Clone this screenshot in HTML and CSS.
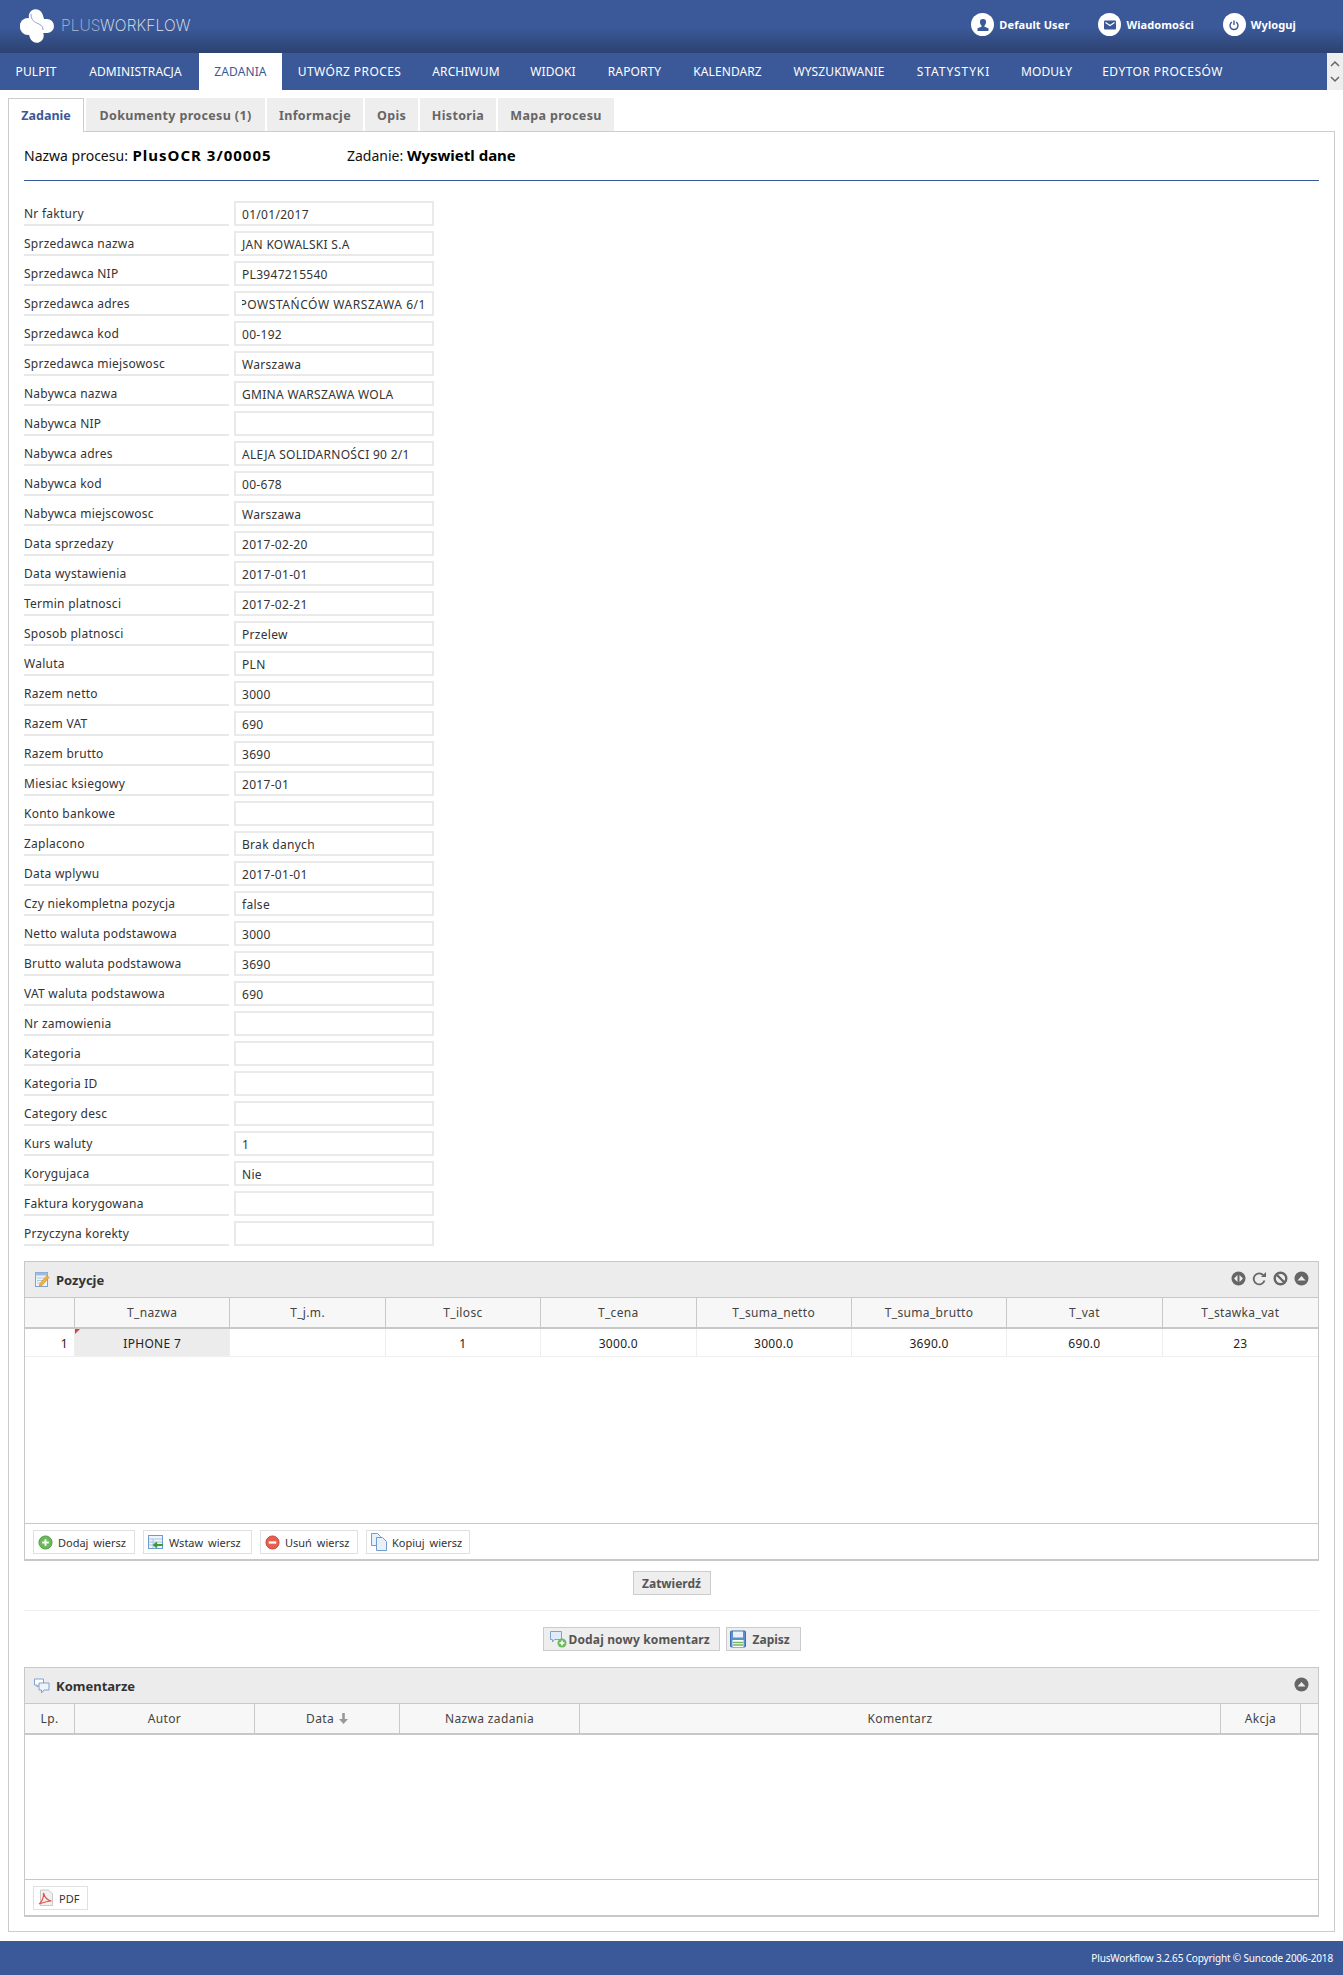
FILE: index.html
```html
<!DOCTYPE html>
<html lang="pl">
<head>
<meta charset="utf-8">
<title>PlusWorkflow</title>
<link rel="stylesheet" href="styles.css">
</head>
<body>
<header class="top">
  <div class="logo">
    <svg class="logo-mark" width="34" height="34" viewBox="0 0 34 34"><rect x="0" y="10" width="34" height="14" rx="7" fill="#fff"/><rect x="0" y="9" width="16" height="17" rx="8" fill="#fff"/><rect x="10.500" y="0" width="14" height="25" rx="7" fill="#fff" transform="rotate(-18 17.500 12.500)"/><rect x="8" y="9" width="14" height="25" rx="7" fill="#fff" transform="rotate(-18 15 21.500)"/><path fill="none" stroke="#8fa3c9" stroke-width="1" d="M11 5c0 6 3 8 8 10 3 1.500 4 3 4 6"/></svg>
    <span class="logo-plus">PLUS</span><span class="logo-wf">WORKFLOW</span>
  </div>
  <div class="user-links">
    <a class="ulink"><span class="ucircle"><svg width="14" height="14" viewBox="0 0 14 14"><path fill="#3b5998" d="M7 1a3 3 0 0 1 3 3.200c0 1.500-.8 2.800-1.500 3.300v1.200l4 1.500V13H1.500v-2.800l4-1.500V7.500C4.800 7 4 5.700 4 4.200A3 3 0 0 1 7 1z"/></svg></span>Default User</a>
    <a class="ulink"><span class="ucircle"><svg width="14" height="14" viewBox="0 0 14 14"><rect x="1" y="2.500" width="12" height="9" rx="1" fill="#3b5998"/><path d="M2.500 4.500l4.500 3 4.500-3" fill="none" stroke="#fff" stroke-width="1.300"/></svg></span>Wiadomości</a>
    <a class="ulink"><span class="ucircle"><svg width="14" height="14" viewBox="0 0 14 14"><path d="M4.800 4.200a4 4 0 1 0 4.400 0" fill="none" stroke="#3b5998" stroke-width="1.400"/><path d="M7 2.500v4.500" stroke="#3b5998" stroke-width="1.400"/></svg></span>Wyloguj</a>
  </div>
</header>
<nav class="nav">
  <a class="nav-item n1">PULPIT</a>
  <a class="nav-item n2">ADMINISTRACJA</a>
  <a class="nav-item nav-active n3">ZADANIA</a>
  <a class="nav-item n4">UTWÓRZ PROCES</a>
  <a class="nav-item n5">ARCHIWUM</a>
  <a class="nav-item n6">WIDOKI</a>
  <a class="nav-item n7">RAPORTY</a>
  <a class="nav-item n8">KALENDARZ</a>
  <a class="nav-item n9">WYSZUKIWANIE</a>
  <a class="nav-item n10">STATYSTYKI</a>
  <a class="nav-item n11">MODUŁY</a>
  <a class="nav-item n12">EDYTOR PROCESÓW</a>
  <div class="nav-scroll">
    <svg width="10" height="8" viewBox="0 0 10 8"><path d="M1 6l4-4 4 4" fill="none" stroke="#666" stroke-width="1.500"/></svg>
    <svg width="10" height="8" viewBox="0 0 10 8"><path d="M1 2l4 4 4-4" fill="none" stroke="#666" stroke-width="1.500"/></svg>
  </div>
</nav>
<main class="content">
  <div class="tabs">
    <a class="tab tab-active t1">Zadanie</a>
    <a class="tab t2">Dokumenty procesu (1)</a>
    <a class="tab t3">Informacje</a>
    <a class="tab t4">Opis</a>
    <a class="tab t5">Historia</a>
    <a class="tab t6">Mapa procesu</a>
  </div>
  <section class="panel">
    <div class="title">
      <span class="title-a">Nazwa procesu: <b class="proc">PlusOCR 3/00005</b></span>
      <span>Zadanie: <b>Wyswietl dane</b></span>
    </div>
    <form class="fields">
      <div class="row"><label>Nr faktury</label><div class="val">01/01/2017</div></div>
      <div class="row"><label>Sprzedawca nazwa</label><div class="val">JAN KOWALSKI S.A</div></div>
      <div class="row"><label>Sprzedawca NIP</label><div class="val">PL3947215540</div></div>
      <div class="row"><label>Sprzedawca adres</label><div class="val"><div class="val-clip"><span>POWSTAŃCÓW WARSZAWA 6/1</span></div></div></div>
      <div class="row"><label>Sprzedawca kod</label><div class="val">00-192</div></div>
      <div class="row"><label>Sprzedawca miejsowosc</label><div class="val">Warszawa</div></div>
      <div class="row"><label>Nabywca nazwa</label><div class="val">GMINA WARSZAWA WOLA</div></div>
      <div class="row"><label>Nabywca NIP</label><div class="val"></div></div>
      <div class="row"><label>Nabywca adres</label><div class="val">ALEJA SOLIDARNOŚCI 90 2/1</div></div>
      <div class="row"><label>Nabywca kod</label><div class="val">00-678</div></div>
      <div class="row"><label>Nabywca miejscowosc</label><div class="val">Warszawa</div></div>
      <div class="row"><label>Data sprzedazy</label><div class="val">2017-02-20</div></div>
      <div class="row"><label>Data wystawienia</label><div class="val">2017-01-01</div></div>
      <div class="row"><label>Termin platnosci</label><div class="val">2017-02-21</div></div>
      <div class="row"><label>Sposob platnosci</label><div class="val">Przelew</div></div>
      <div class="row"><label>Waluta</label><div class="val">PLN</div></div>
      <div class="row"><label>Razem netto</label><div class="val">3000</div></div>
      <div class="row"><label>Razem VAT</label><div class="val">690</div></div>
      <div class="row"><label>Razem brutto</label><div class="val">3690</div></div>
      <div class="row"><label>Miesiac ksiegowy</label><div class="val">2017-01</div></div>
      <div class="row"><label>Konto bankowe</label><div class="val"></div></div>
      <div class="row"><label>Zaplacono</label><div class="val">Brak danych</div></div>
      <div class="row"><label>Data wplywu</label><div class="val">2017-01-01</div></div>
      <div class="row"><label>Czy niekompletna pozycja</label><div class="val">false</div></div>
      <div class="row"><label>Netto waluta podstawowa</label><div class="val">3000</div></div>
      <div class="row"><label>Brutto waluta podstawowa</label><div class="val">3690</div></div>
      <div class="row"><label>VAT waluta podstawowa</label><div class="val">690</div></div>
      <div class="row"><label>Nr zamowienia</label><div class="val"></div></div>
      <div class="row"><label>Kategoria</label><div class="val"></div></div>
      <div class="row"><label>Kategoria ID</label><div class="val"></div></div>
      <div class="row"><label>Category desc</label><div class="val"></div></div>
      <div class="row"><label>Kurs waluty</label><div class="val">1</div></div>
      <div class="row"><label>Korygujaca</label><div class="val">Nie</div></div>
      <div class="row"><label>Faktura korygowana</label><div class="val"></div></div>
      <div class="row"><label>Przyczyna korekty</label><div class="val"></div></div>
    </form>

    <section class="box box-pos">
      <div class="box-head">
        <svg class="box-icon" width="16" height="17" viewBox="0 0 16 17"><rect x="1.500" y="1.500" width="12" height="14" fill="#eef4fb" stroke="#7fa3cf"/><rect x="1.500" y="1.500" width="12" height="3" fill="#9dbde0"/><path d="M3 7h8M3 9.500h6M3 12h4" stroke="#b9c8d8"/><path d="M5 15.500l1-3 7-8 2 2-7 8z" fill="#f3b23c" stroke="#c98a20" stroke-width=".6"/></svg>
        <span class="box-title">Pozycje</span>
        <div class="box-tools">
          <svg width="15" height="15" viewBox="0 0 15 15"><circle cx="7.500" cy="7.500" r="7" fill="#666"/><path d="M6.500 4v7L3 7.500zM8.500 4v7L12 7.500z" fill="#eee"/></svg>
          <svg width="15" height="15" viewBox="0 0 15 15"><path d="M12.500 9.500a5.500 5.500 0 1 1-1.200-5.300" fill="none" stroke="#666" stroke-width="1.800"/><path d="M14 1v5H9z" fill="#666"/></svg>
          <svg width="15" height="15" viewBox="0 0 15 15"><circle cx="7.500" cy="7.500" r="5.800" fill="#eee" stroke="#666" stroke-width="2.400"/><path d="M4 4l7 7" stroke="#666" stroke-width="2.400"/></svg>
          <svg width="15" height="15" viewBox="0 0 15 15"><circle cx="7.500" cy="7.500" r="7" fill="#666"/><path d="M3.500 9.500l4-4.500 4 4.500z" fill="#eee"/></svg>
        </div>
      </div>
      <div class="grid grid-pos grid-headrow">
        <div class="hcell"></div>
        <div class="hcell">T_nazwa</div><div class="hcell">T_j.m.</div><div class="hcell">T_ilosc</div><div class="hcell">T_cena</div>
        <div class="hcell">T_suma_netto</div><div class="hcell">T_suma_brutto</div><div class="hcell">T_vat</div><div class="hcell hcell-last">T_stawka_vat</div>
      </div>
      <div class="grid grid-pos grid-datarow">
        <div class="dcell dcell-num">1</div>
        <div class="dcell dcell-sel">IPHONE 7<i class="marker"></i></div><div class="dcell"></div><div class="dcell">1</div><div class="dcell">3000.0</div>
        <div class="dcell">3000.0</div><div class="dcell">3690.0</div><div class="dcell">690.0</div><div class="dcell">23</div>
      </div>
      <div class="grid-body grid-body-pos"></div>
      <div class="toolbar">
        <a class="btn b-add"><svg width="15" height="15" viewBox="0 0 16 16"><circle cx="8" cy="8" r="7" fill="#6cb85c" stroke="#4d9a43"/><path d="M8 4.500v7M4.500 8h7" stroke="#fff" stroke-width="2"/></svg>Dodaj wiersz</a>
        <a class="btn b-ins"><svg width="16" height="16" viewBox="0 0 16 16"><rect x=".5" y="1.500" width="14" height="13" fill="#eef4fb" stroke="#6f9bd1"/><path d="M1 5h13M1 8h13M1 11h13M5 5v9" stroke="#a9c4e4"/><path d="M15 11H6M9 8.500 6 11l3 2.500" fill="none" stroke="#3f9a3a" stroke-width="1.800"/></svg>Wstaw wiersz</a>
        <a class="btn b-del"><svg width="15" height="15" viewBox="0 0 16 16"><circle cx="8" cy="8" r="7" fill="#e5604f" stroke="#c5443a"/><rect x="4" y="6.800" width="8" height="2.400" fill="#fff"/></svg>Usuń wiersz</a>
        <a class="btn b-copy"><svg width="16" height="18" viewBox="0 0 16 18"><path d="M.5.500h6l3 3v9h-9z" fill="#e8f0fa" stroke="#6f9bd1"/><path d="M5.500 4.500h6l4 4v9h-10z" fill="#e8f0fa" stroke="#6f9bd1"/></svg>Kopiuj wiersz</a>
      </div>
    </section>

    <div class="submit-row"><a class="action action-plain">Zatwierdź</a></div>
    <div class="comment-actions">
      <a class="action act-new"><svg width="18" height="18" viewBox="0 0 18 18"><path d="M1.500 1.500h11v8h-7l-2 2.500V9.500h-2z" fill="#dfeafa" stroke="#7fa3cf"/><circle cx="13" cy="13" r="4.500" fill="#6cb85c"/><path d="M13 10.500v5M10.500 13h5" stroke="#fff" stroke-width="1.500"/></svg>Dodaj nowy komentarz</a>
      <a class="action act-save"><svg width="16" height="18" viewBox="0 0 16 18"><rect x=".5" y="1" width="15" height="16" rx="1" fill="#5b8fd0" stroke="#3f6fae"/><rect x="3" y="1.500" width="10" height="6" fill="#e8f0fa"/><rect x="2.500" y="10" width="11" height="7" fill="#fff"/><path d="M3 12.500h10M3 15h10" stroke="#6cb85c" stroke-width="1.500"/></svg>Zapisz</a>
    </div>

    <section class="box box-com">
      <div class="box-head">
        <svg class="box-icon" width="16" height="16" viewBox="0 0 16 16"><path d="M.5 1h9v6H4.500L3 9V7H.5z" fill="#fff" stroke="#7fa3cf"/><path d="M5 5h10v7h-5l-2.500 3v-3H5z" fill="#eef4fb" stroke="#7fa3cf"/></svg>
        <span class="box-title">Komentarze</span>
        <div class="box-tools">
          <svg width="15" height="15" viewBox="0 0 15 15"><circle cx="7.500" cy="7.500" r="7" fill="#666"/><path d="M3.500 9.500l4-4.500 4 4.500z" fill="#eee"/></svg>
        </div>
      </div>
      <div class="grid grid-com grid-headrow">
        <div class="hcell">Lp.</div><div class="hcell">Autor</div>
        <div class="hcell">Data <svg width="9" height="11" viewBox="0 0 9 11"><path d="M3.200 0h2.600v6H9l-4.500 5L0 6h3.200z" fill="#999"/></svg></div>
        <div class="hcell">Nazwa zadania</div><div class="hcell">Komentarz</div><div class="hcell">Akcja</div><div class="hcell hcell-last"></div>
      </div>
      <div class="grid-body grid-body-com"></div>
      <div class="toolbar">
        <a class="btn b-pdf"><svg width="16" height="18" viewBox="0 0 16 18"><path d="M2.500 1h8l4 4v11.500h-12z" fill="#f1f1f1" stroke="#c8c8c8"/><path d="M1 15c3-2 5-7 4.500-11 1 4 3 7 8 8-4 0-7 1-12.500 3z" fill="none" stroke="#e2574c" stroke-width="1.200"/></svg>PDF</a>
      </div>
    </section>
  </section>
</main>
<footer class="foot">PlusWorkflow 3.2.65 Copyright © Suncode 2006-2018</footer>
</body>
</html>
```
FILE: styles.css
```css
* { box-sizing: border-box; }
html, body { margin: 0; padding: 0; }
body { background: #fff; color: #222; font-family: "Noto Sans", "DejaVu Sans", sans-serif; font-size: 12px; width: 1343px; height: 1975px; display: flex; flex-direction: column; }
a { display: block; }

.top { height: 53px; background: linear-gradient(#3b5998 0, #3b5998 28px, #2c4270 53px); display: flex; align-items: center; justify-content: space-between; color: #fff; }
.logo { display: flex; align-items: center; padding-left: 20px; height: 53px; padding-bottom: 1px; }
.logo-mark { margin-right: 7px; }
.logo-plus, .logo-wf { font-family: "Inter", sans-serif; font-weight: 200; font-size: 15.500px; line-height: 1; }
.logo-plus { color: #aebbd6; width: 39px; letter-spacing: .1px; }
.logo-wf { color: #e4e9f3; letter-spacing: .15px; }
.user-links { display: flex; padding: 0 47px 4px 0; gap: 29px; }
.ulink { display: flex; align-items: center; gap: 5px; font-weight: 700; font-size: 11px; letter-spacing: .1px; }
.ucircle { width: 23px; height: 23px; border-radius: 50%; background: #fff; display: flex; align-items: center; justify-content: center; }

.nav { height: 37px; background: #3b5998; display: flex; color: #fff; position: relative; }
.nav-item { line-height: 37px; font-size: 12px; text-align: center; letter-spacing: .1px; white-space: nowrap; }
.nav-active { background: #fff; color: #3b5998; }
.n1 { width: 72px; } .n2 { width: 127px; } .n3 { width: 83px; } .n4 { width: 135px; letter-spacing: .4px; }
.n5 { width: 98px; } .n6 { width: 76px; } .n7 { width: 87px; } .n8 { width: 99px; }
.n9 { width: 124px; } .n10 { width: 105px; letter-spacing: .9px; } .n11 { width: 81px; } .n12 { width: 151px; letter-spacing: .45px; }
.nav-scroll { position: absolute; right: 0; top: 0; width: 16px; height: 37px; background: #eee; display: flex; flex-direction: column; align-items: center; justify-content: space-around; padding: 3px 0; }

.content { padding: 8px 8px 0; flex: 1; }
.tabs { display: flex; height: 33px; }
.tab { background: #eee; color: #666; font-weight: 700; font-size: 12.500px; letter-spacing: .35px; line-height: 35px; text-align: center; margin-right: 2px; height: 33px; }
.tab-active { background: #fff; color: #3b5998; border: 1px solid #ccc; border-bottom: 0; height: 34px; position: relative; z-index: 1; line-height: 33px; letter-spacing: 0; }
.t1 { width: 76px; } .t2 { width: 179px; } .t3 { width: 96px; } .t4 { width: 53px; } .t5 { width: 76px; } .t6 { width: 116px; }
.panel { border: 1px solid #ccc; padding: 0 15px; height: 1801px; }
.title { height: 49px; border-bottom: 1px solid #3b5998; font-size: 14px; display: flex; align-items: center; color: #111; padding-bottom: 3px; margin-bottom: 20px; }
.title-a { width: 323px; }
.title b { font-size: 15px; color: #000; }
.title .proc { letter-spacing: 1px; margin-left: 1px; }

.fields { display: flex; flex-direction: column; gap: 5px; }
.row { display: flex; gap: 5px; height: 25px; }
.row label { width: 205px; border-bottom: 2px solid #e8e8e8; line-height: 26px; color: #333; letter-spacing: .25px; }
.val { width: 200px; border: 2px solid #eaeaea; padding: 0 6px; line-height: 23px; color: #333; overflow: hidden; white-space: nowrap; letter-spacing: .3px; }
.val-clip { display: flex; justify-content: flex-end; overflow: hidden; }
.val-clip span { flex: none; letter-spacing: .55px; }

.box { border: 1px solid #c8c8c8; border-width: 1px 1px 2px; }
.box-pos { margin-top: 15px; height: 300px; }
.box-com { margin-top: 16px; height: 250px; }
.box-head { height: 36px; background: #ececec; display: flex; align-items: center; padding: 0 9px 0 9px; border-bottom: 1px solid #c8c8c8; }
.box-icon { margin-right: 6px; }
.box-title { font-weight: 700; font-size: 13px; color: #333; }
.box-tools { margin-left: auto; display: flex; gap: 6px; margin-bottom: 2px; }
.grid { display: grid; }
.grid-pos { grid-template-columns: 50px repeat(8, 1fr); }
.grid-com { grid-template-columns: 50px 180px 145px 180px 641px 80px 1fr; }
.grid-headrow { height: 31px; background: #f7f7f7; border-bottom: 2px solid #c8c8c8; }
.hcell { border-right: 1px solid #c8c8c8; display: flex; align-items: center; justify-content: center; gap: 5px; color: #444; font-size: 12px; letter-spacing: .35px; }
.hcell-last { border-right: 0; }
.grid-datarow { height: 28px; border-bottom: 1px solid #eee; }
.dcell { border-right: 1px solid #eee; display: flex; align-items: center; justify-content: center; color: #222; position: relative; letter-spacing: .3px; padding-top: 1px; }
.dcell:last-child { border-right: 0; }
.dcell-num { justify-content: flex-end; padding-right: 6px; }
.dcell-sel { background: #ececec; }
.marker { position: absolute; left: 0; top: 0; border-style: solid; border-width: 5px 5px 0 0; border-color: #e0403a transparent transparent transparent; }
.grid-body-pos { height: 166px; }
.grid-body-com { height: 144px; }
.toolbar { border-top: 1px solid #c8c8c8; height: 36px; display: flex; gap: 8px; padding: 6px 8px; }
.btn { height: 24px; border: 1px solid #e0e0e0; display: flex; align-items: center; gap: 5px; padding-left: 4px; color: #333; font-size: 11px; word-spacing: 2px; white-space: nowrap; }
.b-add { width: 102px; } .b-ins { width: 109px; } .b-del { width: 98px; } .b-copy { width: 104px; } .b-pdf { width: 55px; }

.submit-row { display: flex; justify-content: center; height: 50px; padding-top: 10px; border-bottom: 1px solid #eee; }
.action { height: 24px; border: 1px solid #ccc; background: #eee; color: #555; font-weight: 700; display: flex; align-items: center; white-space: nowrap; font-size: 12px; }
.action-plain { width: 78px; justify-content: center; }
.comment-actions { display: flex; justify-content: center; gap: 6px; padding-top: 16px; height: 40px; }
.act-new { width: 177px; padding-left: 5px; gap: 2px; letter-spacing: .15px; }
.act-save { width: 75px; padding-left: 3px; gap: 7px; }

.foot { height: 34px; background: #3b5998; color: #fff; font-size: 10px; letter-spacing: -.15px; line-height: 34px; text-align: right; padding-right: 10px; }
```
